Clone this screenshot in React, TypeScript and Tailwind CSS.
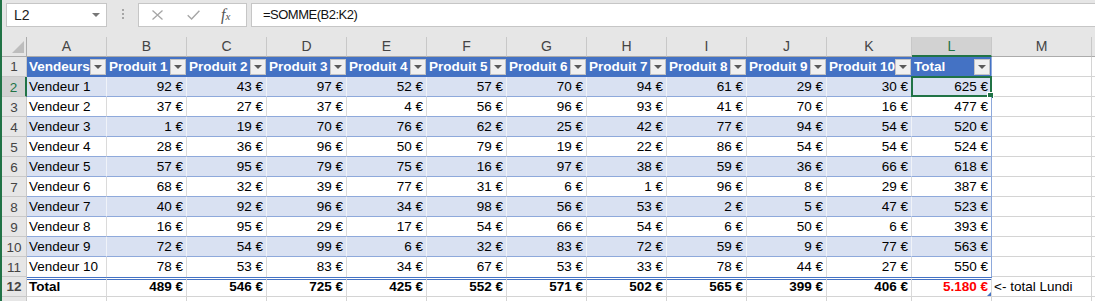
import React from "react";

const rows: [string, number[]][] = [
  ["Vendeur 1", [92, 43, 97, 52, 57, 70, 94, 61, 29, 30]],
  ["Vendeur 2", [37, 27, 37, 4, 56, 96, 93, 41, 70, 16]],
  ["Vendeur 3", [1, 19, 70, 76, 62, 25, 42, 77, 94, 54]],
  ["Vendeur 4", [28, 36, 96, 50, 79, 19, 22, 86, 54, 54]],
  ["Vendeur 5", [57, 95, 79, 75, 16, 97, 38, 59, 36, 66]],
  ["Vendeur 6", [68, 32, 39, 77, 31, 6, 1, 96, 8, 29]],
  ["Vendeur 7", [40, 92, 96, 34, 98, 56, 53, 2, 5, 47]],
  ["Vendeur 8", [16, 95, 29, 17, 54, 66, 54, 6, 50, 6]],
  ["Vendeur 9", [72, 54, 99, 6, 32, 83, 72, 59, 9, 77]],
  ["Vendeur 10", [78, 53, 83, 34, 67, 53, 33, 78, 44, 27]],
];

const letters = ["A", "B", "C", "D", "E", "F", "G", "H", "I", "J", "K", "L"];
const W = [
  "w-[80px]", "w-[80px]", "w-[80px]", "w-[80px]", "w-[80px]", "w-[80px]",
  "w-[80px]", "w-[80px]", "w-[80px]", "w-[80px]", "w-[85px]", "w-[80px]",
];
const heads = [
  "Vendeurs", "Produit 1", "Produit 2", "Produit 3", "Produit 4", "Produit 5",
  "Produit 6", "Produit 7", "Produit 8", "Produit 9", "Produit 10", "Total",
];

const colTotals = rows[0][1].map((_, j) => rows.reduce((s, r) => s + r[1][j], 0));

function RowHead({ n, active }: { n?: number; active?: boolean }) {
  return (
    <div
      className={
        active
          ? "flex w-[25px] shrink-0 items-center justify-center border-b border-r-2 border-b-[#c8c8c8] border-r-[#217346] bg-[#d2d2d2] pt-[1px] text-[13.5px] text-[#217346]"
          : "flex w-[25px] shrink-0 items-center justify-center border-b border-r border-[#c8c8c8] bg-[#e6e6e6] pt-[1px] text-[13.5px] text-[#444]"
      }
    >
      {n}
    </div>
  );
}

function Drop() {
  return (
    <span className="mr-[1px] ml-auto flex h-[16px] w-[16px] shrink-0 items-center justify-center border border-[#c4c4c4] bg-[#f0f0f0]">
      <span className="h-0 w-0 border-x-[4px] border-t-[4px] border-x-transparent border-t-[#5a5a5a]" />
    </span>
  );
}

function GridRest() {
  return (
    <>
      <div className="w-[100px] shrink-0 border-r border-b border-[#d4d4d4]" />
      <div className="flex-1 border-b border-[#d4d4d4]" />
    </>
  );
}

export default function App() {
  return (
    <div className="h-[301px] w-[1095px] overflow-hidden border-l-2 border-[#217346] bg-white font-['Liberation_Sans',Arial,sans-serif] text-black">
      {/* formula bar */}
      <div className="flex h-[37px] items-start bg-[#e6e6e6] pt-[3px]">
        <div className="ml-[4px] flex h-[24px] w-[101px] items-center justify-between border border-[#c6c6c6] bg-white pr-[6px] pl-[7px] text-[14px] text-[#222]">
          <span>L2</span>
          <span className="h-0 w-0 border-x-[4px] border-t-[4px] border-x-transparent border-t-[#777]" />
        </div>
        <div className="mt-[6px] ml-[15px] flex flex-col gap-[2px]">
          <span className="h-[2px] w-[2px] bg-[#a6a6a6]" />
          <span className="h-[2px] w-[2px] bg-[#a6a6a6]" />
          <span className="h-[2px] w-[2px] bg-[#a6a6a6]" />
        </div>
        <div className="ml-[14px] flex h-[24px] w-[109px] items-center border border-[#c6c6c6] bg-white">
          <svg className="ml-[13px]" width="11" height="10" viewBox="0 0 11 10">
            <path d="M0.5 0.5 L10.5 9.5 M10.5 0.5 L0.5 9.5" stroke="#a6a6a6" strokeWidth="1.3" fill="none" />
          </svg>
          <svg className="ml-[24px]" width="13" height="10" viewBox="0 0 13 10">
            <path d="M0.7 5.2 L4.6 9 L12.4 0.8" stroke="#a6a6a6" strokeWidth="1.4" fill="none" />
          </svg>
          <span className="ml-[21px] font-['Liberation_Serif',serif] text-[#555] italic">
            <span className="text-[16px]">f</span>
            <span className="text-[11px]">x</span>
          </span>
        </div>
        <div className="ml-[4px] flex h-[24px] flex-1 items-center border border-r-0 border-[#c6c6c6] bg-white pl-[11px] text-[13px] tracking-[-0.5px] text-[#111]">
          =SOMME(B2:K2)
        </div>
      </div>

      {/* column letters */}
      <div className="flex h-[20px]">
        <div className="flex w-[25px] shrink-0 items-end justify-end border-r border-b border-[#ababab] bg-[#e6e6e6] pr-[2px] pb-[3px]">
          <span className="h-0 w-0 border-b-[12px] border-l-[12px] border-b-[#bdbdbd] border-l-transparent" />
        </div>
        {letters.map((l, j) => (
          <div
            key={l}
            className={
              l === "L"
                ? `${W[j]} flex shrink-0 items-center justify-center border-r border-b-2 border-r-[#c8c8c8] border-b-[#217346] bg-[#d2d2d2] pt-[1px] text-[14px] text-[#217346]`
                : `${W[j]} flex shrink-0 items-center justify-center border-r border-b border-r-[#c8c8c8] border-b-[#ababab] bg-[#e6e6e6] text-[14px] text-[#444]`
            }
          >
            {l}
          </div>
        ))}
        <div className="flex w-[100px] shrink-0 items-center justify-center border-r border-b border-r-[#c8c8c8] border-b-[#ababab] bg-[#e6e6e6] text-[14px] text-[#444]">
          M
        </div>
        <div className="flex-1 border-b border-[#ababab] bg-[#e6e6e6]" />
      </div>

      {/* table header */}
      <div className="flex h-[20px] text-[13.5px]">
        <RowHead n={1} />
        {heads.map((h, j) => (
          <div
            key={h}
            className={`${W[j]} flex shrink-0 items-center border-b border-b-[#4472c4] bg-[#4472c4] pl-[2px] leading-[19px] font-bold text-white ${j === 11 ? "border-r border-r-[#8ea9db]" : ""}`}
          >
            <span className="overflow-hidden whitespace-nowrap">{h}</span>
            <Drop />
          </div>
        ))}
        <GridRest />
      </div>

      {/* data rows */}
      {rows.map(([name, vals], i) => {
        const band = i % 2 === 0;
        const last = i === rows.length - 1;
        const bg = band ? "bg-[#d9e1f2]" : "bg-white";
        const hline = last ? "" : "border-b border-b-[#8ea9db]";
        const vline = band ? "border-r border-r-[#f0f3f9]" : "border-r border-r-[#dadada]";
        const total = vals.reduce((s, v) => s + v, 0);
        return (
          <div key={name} className="flex h-[20px] text-[13.5px] leading-[19px]">
            <RowHead n={i + 2} active={i === 0} />
            <div className={`${W[0]} shrink-0 ${vline} ${hline} ${bg} pl-[2px] whitespace-nowrap`}>{name}</div>
            {vals.map((v, j) => (
              <div key={j} className={`${W[j + 1]} shrink-0 ${vline} ${hline} ${bg} pr-[3px] text-right`}>
                {v} €
              </div>
            ))}
            <div className={`relative ${W[11]} shrink-0 border-r border-r-[#8ea9db] ${hline} ${bg} pr-[3px] text-right`}>
              {total} €
              {i === 0 && (
                <span className="absolute -top-[1px] -right-[1px] -bottom-[1px] -left-[1px] border-2 border-[#217346]">
                  <span className="absolute -right-[4px] -bottom-[4px] h-[7px] w-[7px] border border-white bg-[#217346]" />
                </span>
              )}
            </div>
            <GridRest />
          </div>
        );
      })}

      {/* total row */}
      <div className="flex h-[20px] text-[13.5px] leading-[14px] font-bold">
        <RowHead n={12} />
        <div className={`${W[0]} shrink-0 border-t-[3px] border-r border-b border-double border-t-[#4472c4] border-r-[#dadada] border-b-[#d4d4d4] pl-[2px]`}>
          Total
        </div>
        {colTotals.map((t, j) => (
          <div
            key={j}
            className={`${W[j + 1]} shrink-0 border-t-[3px] border-r border-b border-double border-t-[#4472c4] border-r-[#dadada] border-b-[#d4d4d4] pr-[3px] text-right`}
          >
            {t} €
          </div>
        ))}
        <div className={`relative ${W[11]} shrink-0 border-t-[3px] border-r border-b border-double border-t-[#4472c4] border-r-[#dadada] border-b-[#d4d4d4] pr-[3px] text-right text-[#ff0000]`}>
          5.180 €
          <span className="absolute right-0 bottom-0 h-0 w-0 border-b-[4px] border-l-[4px] border-b-[#4472c4] border-l-transparent" />
        </div>
        <div className="w-[100px] shrink-0 overflow-visible border-r border-b border-[#d4d4d4] pt-[3px] pl-[2px] font-normal whitespace-nowrap">
          &lt;- total Lundi
        </div>
        <div className="flex-1 border-b border-[#d4d4d4]" />
      </div>

      {/* row 13 (partly visible) */}
      <div className="flex h-[20px]">
        <RowHead />
        {W.map((w, j) => (
          <div key={j} className={`${w} shrink-0 border-r border-b border-[#d4d4d4]`} />
        ))}
        <GridRest />
      </div>
    </div>
  );
}
